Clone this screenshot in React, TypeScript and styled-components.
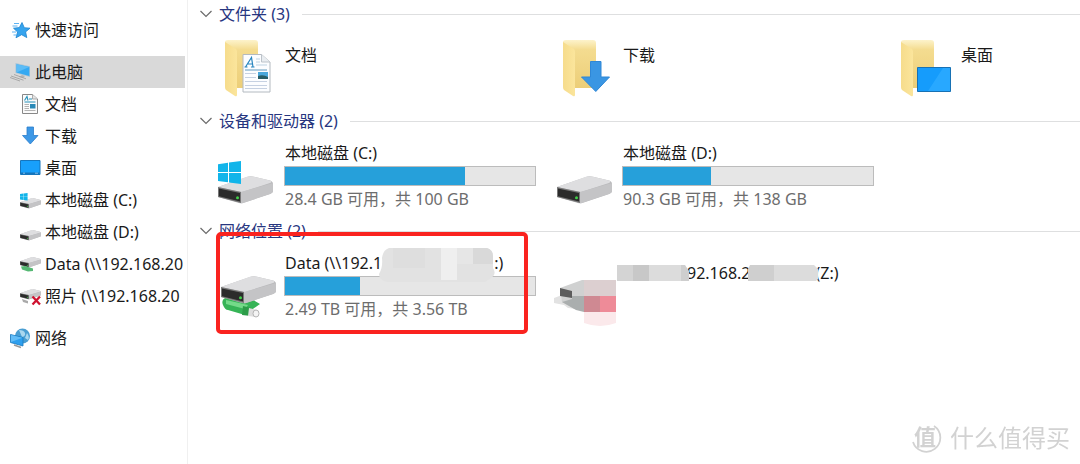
import React from 'react';
import styled, { createGlobalStyle } from 'styled-components';

const GlobalStyle = createGlobalStyle`
  * { box-sizing: border-box; }
  body {
    margin: 0;
    background: #fff;
    color: #1a1a1a;
    font: 16px/24px "Noto Sans", "Noto Sans CJK SC", sans-serif;
  }
`;

const Explorer = styled.div`
  display: flex;
  min-height: 100vh;
  overflow: hidden;
`;

const Sidebar = styled.nav`
  flex: 0 0 188px;
  padding: 14px 2px 0 0;
  border-right: 1px solid #f0f0f0;
`;

const NavGroup = styled.div`
  margin-bottom: 10px;
`;

const NavLink = styled.a<{ $nested?: boolean; $active?: boolean }>`
  display: flex;
  align-items: center;
  gap: 4px;
  height: 32px;
  padding-left: ${(p) => (p.$nested ? 20 : 10)}px;
  background: ${(p) => (p.$active ? '#d9d9d9' : 'transparent')};
  color: inherit;
  text-decoration: none;
  white-space: nowrap;
  overflow: hidden;

  svg { flex: none; }
`;

const Main = styled.main`
  flex: 1;
  min-width: 0;
  padding: 2px 0 0 12px;
`;

const Section = styled.section<{ $height: number }>`
  position: relative;
  min-height: ${(p) => p.$height}px;
`;

const GroupHeader = styled.h2`
  display: flex;
  align-items: center;
  gap: 12px;
  height: 24px;
  margin: 0;
  font: inherit;

  &::after {
    content: '';
    flex: 1;
    height: 1px;
    background: #dedfe0;
  }
`;

const GroupToggle = styled.button`
  display: flex;
  align-items: center;
  gap: 7px;
  padding: 0;
  border: 0;
  background: none;
  color: #27367f;
  font: inherit;
`;

const Tiles = styled.div<{ $top: number }>`
  display: grid;
  grid-template-columns: 338px 338px 1fr;
  padding: ${(p) => p.$top}px 0 0 16px;
`;

const Tile = styled.article`
  display: grid;
  grid-template-columns: 64px 256px;
  gap: 4px;

  > svg { display: block; }
`;

const TileText = styled.div<{ $top?: number }>`
  padding-top: ${(p) => p.$top ?? 0}px;
`;

const Name = styled.div`
  display: flex;
  height: 24px;
  padding-left: 1px;
  white-space: pre;
`;

const Meter = styled.div`
  width: 252px;
  height: 20px;
  margin: 1px 0;
  border: 1px solid #bcbcbc;
  background: #e6e6e6;
`;

const MeterFill = styled.div`
  height: 100%;
  background: #26a0da;
`;

const Caption = styled.div`
  padding-left: 1px;
  color: #6d6d6d;
  white-space: nowrap;
`;

const Redacted = styled.span<{ $width: number }>`
  position: relative;
  flex: 0 0 ${(p) => p.$width}px;

  svg { position: absolute; z-index: 1; }
`;

const NameMask = styled.svg`
  left: -3px;
  top: -3px;
`;

const LabelMask = styled.svg`
  left: -6px;
  top: 4px;
`;

const AddressMask = styled.svg`
  left: -3px;
  top: 4px;
`;

const Highlight = styled.div`
  position: absolute;
  z-index: 2;
  left: 16px;
  top: 13px;
  width: 312px;
  height: 102px;
  border: 4px solid #fa231f;
  border-radius: 5px;
  pointer-events: none;
`;

const Watermark = styled.div`
  position: fixed;
  right: 10px;
  bottom: 10px;
  display: flex;
  align-items: center;
  gap: 8px;
  color: #d2d2d2;
  font-size: 24px;
  line-height: 32px;
`;

const Chevron = () => (
  <svg width="12" height="8" viewBox="0 0 12 8" fill="none" stroke="#6b6b6b" strokeWidth="1.2">
    <path d="M.5 1 6 6.5 11.500 1" />
  </svg>
);

const Star = () => (
  <svg width="21" height="18" viewBox="0 0 21 18">
    <path d="M12 1.500 14.300 6.700 20 7.200 15.600 10.900 16.800 16.600 11.600 13.700 6 16.800 7.600 11 3.500 7.200 9.300 6.600Z" fill="#36a4ee" stroke="#1e84cf" strokeWidth=".8" />
    <path d="M4 2.500h5M2.500 5h5M2 11h4M3.500 14h3" stroke="#4aaaf0" strokeWidth=".9" />
  </svg>
);

const Computer = () => (
  <svg width="21" height="20" viewBox="0 0 21 20">
    <path d="M5.500 1 20 4.200V15L5.500 11Z" fill="#a9c4d6" />
    <path d="M6.500 2.200 19.300 5V14L6.500 10.400Z" fill="#35a9f2" />
    <path d="M6.500 2.200 19.300 5 6.500 10.400Z" fill="#5cbcf6" />
    <path d="M12 13 15 14 13 16 9 15Z" fill="#b4b4b4" />
    <path d="M1 14 13.500 18.200M4 12.500 16 16.800M0 15.500 10 19" stroke="#a2a2a2" strokeWidth=".9" />
  </svg>
);

const Doc = () => (
  <svg width="21" height="20" viewBox="0 0 21 20">
    <path d="M2.500.5h10L17.500 5v14.500h-15Z" fill="#fbfbfb" stroke="#888" />
    <path d="M12.500.5V5h5" fill="#e5e5e5" stroke="#999" strokeWidth=".8" />
    <path d="M4.500 6.500 7 2.500 8 6.500M9 5h3M4.500 8h11" fill="none" stroke="#2691ba" strokeWidth="1.100" />
    <path d="M10 10h5.500v4.500H10Z" fill="#2a8ab8" />
    <path d="M4.500 10.500h4.500M4.500 12.500h4.500M4.500 14.500h4.500M4.500 16.500h11" stroke="#aaa" strokeWidth=".9" />
  </svg>
);

const Down = () => (
  <svg width="21" height="20" viewBox="0 0 21 20">
    <path d="M7 1h6.500v8.500H18L10.300 18 2.500 9.500H7Z" fill="#3d98e6" stroke="#2c7dcb" strokeWidth=".8" />
  </svg>
);

const Desktop = () => (
  <svg width="21" height="16" viewBox="0 0 21 16">
    <path d="M.5.5h19.500v14H.5Z" fill="#18a0fb" stroke="#1676bd" />
    <path d="M1 12.500h18.500V14H1Z" fill="#1474bb" />
    <path d="M3 13.200h2M15 13.200h3" stroke="#b5e0ff" strokeWidth=".7" />
  </svg>
);

const WinLogo = () => (
  <path d="M0 3.200 10 1.800V11H0ZM11 1.600 23 0V11H11ZM0 12H10V21.300L0 20ZM11 12H23V23L11 21.400Z" fill="#12b5ea" />
);

type DriveKind = 'system' | 'plain' | 'network' | 'offline';

const DriveShape = () => (
  <g>
    <path d="M0 11 29 1Q32-.2 36 .8L52 4.500Q55 5.500 55 8V15Q55 17 52 18L25 27Q23 27.600 21 27L0 21Z" fill="#b9b9bb" />
    <path d="M0 11 29 .8Q32-.2 36 .8L52 4.500Q55 5.500 52 7L24 16Z" fill="#dedee0" />
    <path d="M23 16 55 7V15Q55 17 52 18L25 27Q23 27.500 23 27Z" fill="#c4c4c6" />
    <path d="M0 11 23 16V27L0 21Z" fill="#777" />
    <path d="M1 12.500 22 17V25.500L1 20.300Z" fill="#2b2b2b" />
    <circle cx="19.500" cy="21.700" r="1.500" fill="#42cf4a" />
  </g>
);

const SmallDrive = ({ kind }: { kind: DriveKind }) => (
  <svg width="21" height="20" viewBox="0 0 21 20">
    <g transform={kind === 'network' || kind === 'offline' ? 'translate(0 3) scale(.38)' : 'translate(0 8) scale(.38)'}>
      <DriveShape />
    </g>
    {kind === 'system' && <g transform="translate(0 3) scale(.33)"><WinLogo /></g>}
    {kind === 'network' && <path d="M1 12.500 5 12 13 14.500V17L8 17.500 2 15.500Z" fill="#55b873" />}
    {kind === 'offline' && (
      <>
        <path d="M2 13 8 15V17.500L3 16Z" fill="#aaa" />
        <path d="M12.500 10.500 20 18.500M20 10.500 12.500 18.500" stroke="#cf1230" strokeWidth="2.300" />
      </>
    )}
  </svg>
);

const Network = () => (
  <svg width="21" height="21" viewBox="0 0 21 21">
    <circle cx="12.500" cy="8" r="7.500" fill="#4a9ed2" />
    <path d="M9 2Q14 2 15 5T12 9ZM17 5Q20 9 18 12L15 10Z" fill="#a9d7ef" />
    <path d="M.5 6.500 13 9.500V18L.5 14.500Z" fill="#2e9fee" stroke="#1878be" strokeWidth=".8" />
    <path d="M1 7 12.500 9.800 1 14Z" fill="#63bdf7" />
    <path d="M4 17 11 19.500" stroke="#999" strokeWidth="1.500" />
  </svg>
);

const FolderBase = () => (
  <>
    <defs>
      <linearGradient id="folder-back" x2="0" y2="1">
        <stop offset="0" stopColor="#fdf3cb" />
        <stop offset=".2" stopColor="#f4dc90" />
        <stop offset="1" stopColor="#ecce78" />
      </linearGradient>
      <linearGradient id="folder-front">
        <stop offset="0" stopColor="#f6dc8c" />
        <stop offset="1" stopColor="#fbe59c" />
      </linearGradient>
    </defs>
    <path d="M9 2Q9 0 12 0H39Q42 0 42 3V48H12Z" fill="url(#folder-back)" />
    <path d="M9 2 20 9Q21 10 21 12V55Q21 57 19 56L10 50Q9 49 9 47Z" fill="url(#folder-front)" />
  </>
);

const DocsFolder = () => (
  <svg width="64" height="60" viewBox="0 0 64 60">
    <FolderBase />
    <path d="M27 14.500h18.500L54 22v30H27Z" fill="#fcfdff" stroke="#b4bac0" />
    <path d="M45.500 14.500V22H54" fill="#e9edf1" stroke="#bcc3ca" />
    <path d="M29.500 27 35.500 17.500 37 27M32 24h5M28.500 27h3M35 27h3.500" fill="none" stroke="#2785bf" strokeWidth="1.200" />
    <path d="M40 19h4M40 22h4M40 25h11" stroke="#bdd2e2" />
    <path d="M29 30h22" stroke="#609abf" />
    <path d="M42 32h10v7H42Z" fill="#4ba8dc" />
    <path d="M42 36Q47 34 52 37V39H42Z" fill="#285d66" />
    <path d="M29 33.500h11M29 37.500h11M29 41.500h22M29 45.500h22M29 48.500h22" stroke="#c6d1e2" />
  </svg>
);

const DownloadsFolder = () => (
  <svg width="64" height="60" viewBox="0 0 64 60">
    <FolderBase />
    <path d="M36.500 21.500h10.500V37h8.500L41.800 51.500 27.500 37h9Z" fill="#3a96e3" stroke="#2f87d6" />
  </svg>
);

const DesktopFolder = () => (
  <svg width="64" height="60" viewBox="0 0 64 60">
    <FolderBase />
    <path d="M25.500 27.500h33v24h-33Z" fill="#159cfc" stroke="#1771b4" />
    <path d="M51 28h7v23H36Z" fill="#28a8ff" />
  </svg>
);

const SystemDrive = () => (
  <svg width="64" height="72" viewBox="0 0 64 72">
    <g transform="translate(2 43)"><DriveShape /></g>
    <g transform="translate(2 28)"><WinLogo /></g>
  </svg>
);

const PlainDrive = () => (
  <svg width="64" height="72" viewBox="0 0 64 72">
    <g transform="translate(3 43)"><DriveShape /></g>
  </svg>
);

const NetworkDrive = () => (
  <svg width="64" height="76" viewBox="0 0 64 76">
    <path d="M9 55Q5 57 7 62T12 67L29 72 34 68 44 61 34 55Z" fill="#36b457" />
    <path d="M10 57 32 62 29 66 10 61Z" fill="#74da89" />
    <path d="M27 63 35 65V73L26 72Z" fill="#2d9c49" />
    <path d="M33 65 41 67V74L32 73Z" fill="#dedede" />
    <ellipse cx="40" cy="70.500" rx="3" ry="3.500" fill="#f4f4f4" stroke="#b5b5b5" />
    <g transform="translate(5 33)"><DriveShape /></g>
  </svg>
);

const ObscuredDrive = () => (
  <svg width="64" height="84" viewBox="0 0 64 84">
    <path d="M0 55 8 52 22 59V66L14 65 10 62 0 60Z" fill="#e2e2e2" />
    <path d="M6 45 28 37H62V53H36L30 67 21 66 8 59Z" fill="#d0d1d1" />
    <path d="M6 45 18 48V55L6 53Z" fill="#5c5c5c" />
    <path d="M18 53H30V69L22 67 8 59 18 56Z" fill="#aaaeae" />
    <path d="M30 37H62V53H30Z" fill="#dccfd0" />
    <path d="M30 53H46V69H30Z" fill="#cf8992" />
    <path d="M46 53H62V69H46Z" fill="#ee8b98" />
    <path d="M30 69H62V80Q46 86 30 80Z" fill="#fbe9eb" />
  </svg>
);

const Drive = ({ icon, name, used, caption }: {
  icon: React.ReactNode; name: React.ReactNode; used: number; caption: string;
}) => (
  <Tile>
    {icon}
    <TileText $top={8}>
      <Name>{name}</Name>
      <Meter role="meter" aria-label={caption} aria-valuenow={used} aria-valuemin={0} aria-valuemax={100}>
        <MeterFill style={{ width: `${used}%` }} />
      </Meter>
      <Caption>{caption}</Caption>
    </TileText>
  </Tile>
);

const Header = ({ children }: { children: React.ReactNode }) => (
  <GroupHeader>
    <GroupToggle type="button" aria-expanded="true"><Chevron />{children}</GroupToggle>
  </GroupHeader>
);

const places: { label: string; icon: React.ReactNode }[] = [
  { label: '文档', icon: <Doc /> },
  { label: '下载', icon: <Down /> },
  { label: '桌面', icon: <Desktop /> },
  { label: '本地磁盘 (C:)', icon: <SmallDrive kind="system" /> },
  { label: '本地磁盘 (D:)', icon: <SmallDrive kind="plain" /> },
  { label: 'Data (\\\\192.168.20', icon: <SmallDrive kind="network" /> },
  { label: '照片 (\\\\192.168.20', icon: <SmallDrive kind="offline" /> },
];

const folders = [
  { label: '文档', icon: <DocsFolder /> },
  { label: '下载', icon: <DownloadsFolder /> },
  { label: '桌面', icon: <DesktopFolder /> },
];

export default function App() {
  return (
    <Explorer lang="zh-CN">
      <GlobalStyle />
      <Sidebar>
        <NavGroup>
          <NavLink href="#quick"><Star />快速访问</NavLink>
        </NavGroup>
        <NavGroup>
          <NavLink href="#pc" $active aria-current="page"><Computer />此电脑</NavLink>
          {places.map((p) => (
            <NavLink key={p.label} href="#place" $nested>{p.icon}{p.label}</NavLink>
          ))}
        </NavGroup>
        <NavLink href="#network"><Network />网络</NavLink>
      </Sidebar>
      <Main>
        <Section $height={107}>
          <Header>文件夹 (3)</Header>
          <Tiles $top={14}>
            {folders.map((f) => (
              <Tile key={f.label}>
                {f.icon}
                <TileText $top={3}><Name>{f.label}</Name></TileText>
              </Tile>
            ))}
          </Tiles>
        </Section>
        <Section $height={110}>
          <Header>设备和驱动器 (2)</Header>
          <Tiles $top={0}>
            <Drive icon={<SystemDrive />} name="本地磁盘 (C:)" used={72} caption="28.4 GB 可用，共 100 GB" />
            <Drive icon={<PlainDrive />} name="本地磁盘 (D:)" used={35} caption="90.3 GB 可用，共 138 GB" />
          </Tiles>
        </Section>
        <Section $height={120}>
          <Header>网络位置 (2)</Header>
          <Tiles $top={0}>
            <Drive
              icon={<NetworkDrive />}
              name={
                <>
                  {'Data (\\\\192.1'}
                  <Redacted $width={112}>
                    <NameMask width="118" height="34" viewBox="0 0 118 34">
                      <path d="M10 0H108Q114 2 114 8V20Q118 26 112 30L106 34H8Q0 32 0 26 4 20 3 10 4 2 10 0Z" fill="#e2e2e2" />
                      <path d="M14 0H46V20H14Z" fill="#dedede" />
                      <path d="M62 0H78V32H62Z" fill="#efefef" />
                      <path d="M78 0H94V16H78Z" fill="#e6e6e6" />
                      <path d="M94 0H108Q114 2 114 8V16H94Z" fill="#d9d9d9" />
                    </NameMask>
                  </Redacted>
                  {':)'}
                </>
              }
              used={30}
              caption="2.49 TB 可用，共 3.56 TB"
            />
            <Tile>
              <ObscuredDrive />
              <TileText $top={18}>
                <Name>
                  <Redacted $width={64}>
                    <LabelMask width="72" height="16" viewBox="0 0 72 16">
                      <path d="M0 0H16V16H0Z" fill="#d4d4d4" />
                      <path d="M16 0H32V16H16Z" fill="#c8c8c8" />
                      <path d="M32 0H64V16H32Z" fill="#dcdcdc" />
                      <path d="M64 0H68L72 6V16H64Z" fill="#cecece" />
                    </LabelMask>
                  </Redacted>
                  92.168.2
                  <Redacted $width={65}>
                    <AddressMask width="70" height="16" viewBox="0 0 70 16">
                      <path d="M2 0H26V16H0V4Z" fill="#cfcfcf" />
                      <path d="M26 0H66L70 4V14L68 16H26Z" fill="#dcdcdc" />
                    </AddressMask>
                  </Redacted>
                  (Z:)
                </Name>
              </TileText>
            </Tile>
          </Tiles>
          <Highlight />
        </Section>
      </Main>
      <Watermark>
        <svg width="32" height="32" viewBox="0 0 32 32">
          <path d="M24 4A14 14 0 1 1 3 20" fill="none" stroke="#d2d2d2" strokeWidth="1.800" />
          <text x="15" y="23" textAnchor="middle" fontSize="22" fontWeight="700" fill="#d2d2d2">值</text>
        </svg>
        什么值得买
      </Watermark>
    </Explorer>
  );
}
